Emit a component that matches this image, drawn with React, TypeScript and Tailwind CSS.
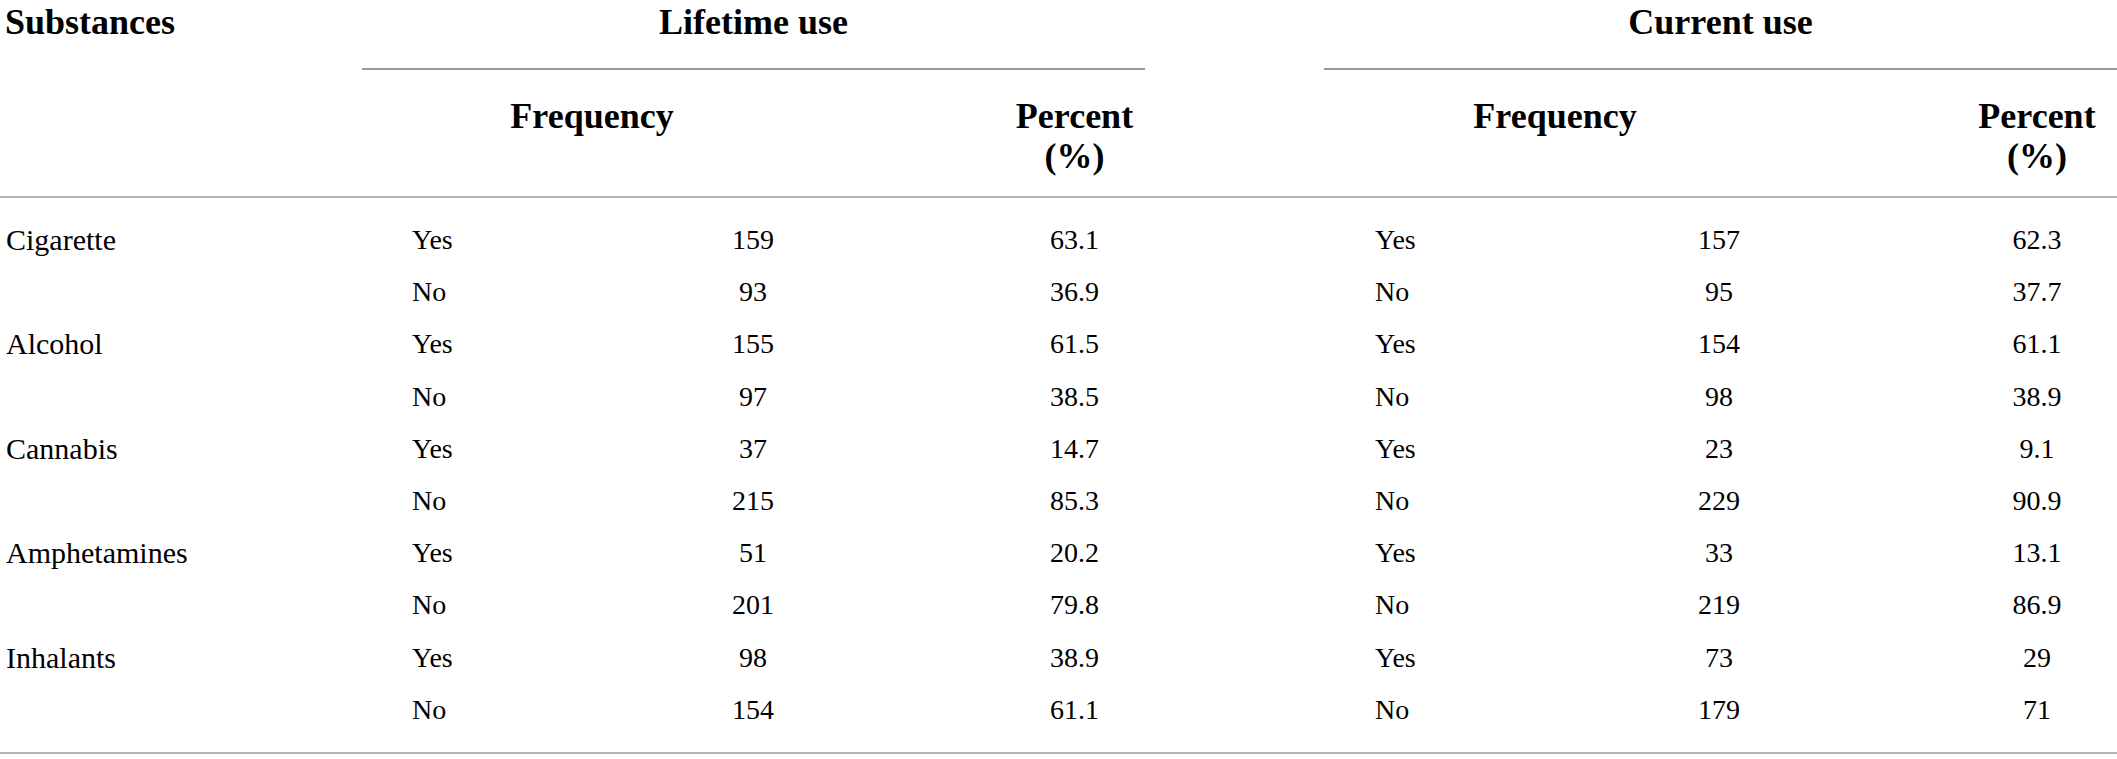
const rows = [
  { name: "Cigarette", answer: "Yes", lifeFreq: "159", lifePct: "63.1", curFreq: "157", curPct: "62.3" },
  { name: "", answer: "No", lifeFreq: "93", lifePct: "36.9", curFreq: "95", curPct: "37.7" },
  { name: "Alcohol", answer: "Yes", lifeFreq: "155", lifePct: "61.5", curFreq: "154", curPct: "61.1" },
  { name: "", answer: "No", lifeFreq: "97", lifePct: "38.5", curFreq: "98", curPct: "38.9" },
  { name: "Cannabis", answer: "Yes", lifeFreq: "37", lifePct: "14.7", curFreq: "23", curPct: "9.1" },
  { name: "", answer: "No", lifeFreq: "215", lifePct: "85.3", curFreq: "229", curPct: "90.9" },
  { name: "Amphetamines", answer: "Yes", lifeFreq: "51", lifePct: "20.2", curFreq: "33", curPct: "13.1" },
  { name: "", answer: "No", lifeFreq: "201", lifePct: "79.8", curFreq: "219", curPct: "86.9" },
  { name: "Inhalants", answer: "Yes", lifeFreq: "98", lifePct: "38.9", curFreq: "73", curPct: "29" },
  { name: "", answer: "No", lifeFreq: "154", lifePct: "61.1", curFreq: "179", curPct: "71" },
];

const cols =
  "grid grid-cols-[362px_300px_182px_160px_141px_179px_300px_190px_143px_160px]";

const App = () => {
  return (
    <div className="w-[2117px] h-[759px] bg-white text-black font-['Liberation_Serif',serif]">
      {/* title row */}
      <div className={`${cols} h-[70px] text-[36px] leading-[40px] font-bold`}>
        <div className="pl-[5px] pt-[2px]">Substances</div>
        <div className="col-span-4 text-center pt-[2px] border-b-2 border-[#9a9a9a]">
          Lifetime use
        </div>
        <div />
        <div className="col-span-4 text-center pt-[2px] border-b-2 border-[#9a9a9a]">
          Current use
        </div>
      </div>

      {/* sub header row */}
      <div
        className={`${cols} h-[128px] pt-[26px] text-[36px] leading-[40px] font-bold border-b-2 border-[#b4b4b4]`}
      >
        <div />
        <div className="col-span-2 text-center pr-[22px]">Frequency</div>
        <div />
        <div className="text-center">Percent (%)</div>
        <div />
        <div className="col-span-2 text-center pr-[28px]">Frequency</div>
        <div />
        <div className="text-center">Percent (%)</div>
      </div>

      {/* data rows */}
      <div className="pt-[16px] pb-[16px] text-[28px] leading-[52.2px] border-b-2 border-[#b4b4b4]">
        {rows.map((r, i) => (
          <div key={i} className={`${cols} h-[52.2px]`}>
            <div className="pl-[6px] text-[30px]">{r.name}</div>
            <div className="pl-[50px]">{r.answer}</div>
            <div className="text-center">{r.lifeFreq}</div>
            <div />
            <div className="text-center">{r.lifePct}</div>
            <div />
            <div className="pl-[51px]">{r.answer}</div>
            <div className="text-center">{r.curFreq}</div>
            <div />
            <div className="text-center">{r.curPct}</div>
          </div>
        ))}
      </div>
    </div>
  );
};

export default App;
